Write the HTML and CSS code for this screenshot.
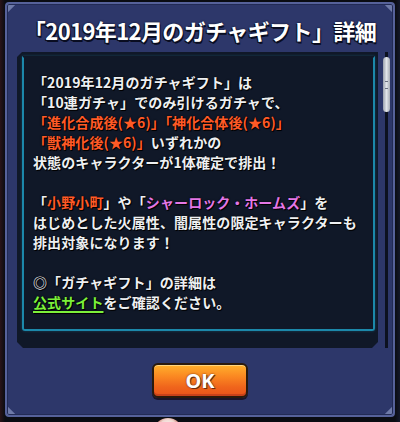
FILE: index.html
```html
<!DOCTYPE html>
<html lang="ja">
<head>
    <meta charset="UTF-8">
    <meta name="viewport" content="width=device-width, initial-scale=1.0">
    <title>ガチャギフト詳細</title>
    <link rel="stylesheet" href="styles.css">
</head>
<body>
    <div class="screen">
        <div class="dialog">
            <h1 class="dialog-title">「2019年12月のガチャギフト」詳細</h1>

            <div class="dialog-body">
                <div class="scroll-box">
                    <div class="scroll-inner">
                        <p>「2019年12月のガチャギフト」は<br>
                        「10連ガチャ」でのみ引けるガチャで、<br>
                        <span class="red">「進化合成後(★6)」「神化合体後(★6)」</span><br>
                        <span class="red">「獣神化後(★6)」</span>いずれかの<br>
                        状態のキャラクターが1体確定で排出！</p>

                        <p>「<span class="red">小野小町</span>」や「<span class="pink">シャーロック・ホームズ</span>」を<br>
                        はじめとした火属性、闇属性の限定キャラクターも<br>
                        排出対象になります！</p>

                        <p>◎「ガチャギフト」の詳細は<br>
                        <a class="link" href="#">公式サイト</a>をご確認ください。</p>
                    </div>
                </div>
                <div class="scrollbar">
                    <div class="thumb"><span></span></div>
                </div>
            </div>

            <div class="dialog-actions">
                <button class="ok-btn">OK</button>
            </div>
        </div>
        <div class="peek"></div>
    </div>
</body>
</html>
```

FILE: styles.css
```css
body {
    margin: 0;
    background-color: #0a0c12;
    font-family: "Noto Sans CJK JP", "Noto Sans", sans-serif;
}

.screen {
    width: 400px;
    height: 422px;
    overflow: hidden;
    padding-top: 2px;
    box-sizing: border-box;
    background: linear-gradient(90deg, #2a1418 0, #0a0c12 5px, #0a0c12 395px, #14182a 400px);
}

/* ダイアログ本体 */
.dialog {
    width: 390px;
    height: 415px;
    margin: 0 5px;
    box-sizing: border-box;
    border: 2px solid #56629a;
    border-radius: 4px;
    box-shadow: inset 0 0 0 1px #222b55;
    background:
        linear-gradient(135deg, #6e7aa8 6px, transparent 7px) top left / 12px 12px no-repeat,
        linear-gradient(225deg, #6e7aa8 6px, transparent 7px) top right / 12px 12px no-repeat,
        linear-gradient(45deg, #6e7aa8 6px, transparent 7px) bottom left / 12px 12px no-repeat,
        linear-gradient(315deg, #6e7aa8 6px, transparent 7px) bottom right / 12px 12px no-repeat,
        #2d376a;
    display: flex;
    flex-direction: column;
}

.dialog-title {
    margin: 4px 0 0;
    height: 44px;
    line-height: 44px;
    text-align: center;
    font-size: 22px;
    font-weight: 700;
    color: #ffffff;
    letter-spacing: -0.6px;
    text-shadow: 0 0 2px #0a0e22, 1px 2px 0 #0a0e22, -1px 1px 0 #0a0e22;
}

.dialog-body {
    display: flex;
    height: 296px;
    margin-left: 10px;
}

.scroll-box {
    width: 361px;
    padding: 4px 3px 17px 5px;
    box-sizing: border-box;
    background-color: #101828;
    clip-path: polygon(5px 0, 100% 0, 100% calc(100% - 6px), calc(100% - 6px) 100%, 6px 100%, 0 calc(100% - 6px), 0 5px);
}

.scroll-inner {
    height: 100%;
    box-sizing: border-box;
    border: 2px solid #1c88aa;
    border-top-color: transparent;
    border-radius: 0 0 3px 3px;
    box-shadow: 0 0 3px rgba(40, 170, 210, 0.3);
    padding: 14px 0 0 9px;
    font-size: 14px;
    line-height: 20px;
    font-weight: 700;
    color: #eef0f2;
    letter-spacing: 0.1px;
    text-shadow: 1px 1px 0 #000, 0 0 2px #000;
}

.scroll-inner p {
    margin: 0 0 20px;
}

.red {
    color: #ff5a26;
}

.pink {
    color: #e477e6;
}

.link {
    color: #7cf03a;
    text-decoration: underline;
    text-decoration-thickness: 2px;
    text-underline-offset: 3px;
}

.scrollbar {
    width: 7px;
    margin-left: 5px;
    background: linear-gradient(90deg, transparent 2px, #0c1120 2px, #0c1120 5px, transparent 5px);
}

.thumb {
    height: 55px;
    margin-top: 5px;
    border-radius: 4px;
    background: linear-gradient(90deg, #9aa0ac, #e2e5ea 50%, #a7acb6);
    display: flex;
    align-items: center;
    justify-content: center;
}

.thumb span {
    width: 3px;
    height: 6px;
    border-top: 1px solid #6a7080;
    border-bottom: 1px solid #6a7080;
}

.dialog-actions {
    flex: 1;
    display: flex;
    justify-content: center;
    padding-top: 15px;
}

.ok-btn {
    width: 96px;
    height: 35px;
    border: 2px solid #2b1a0c;
    border-radius: 6px;
    background: linear-gradient(#ffb02c 0, #fb8a22 35%, #f0661c 70%, #e8521a 100%);
    box-shadow: inset 0 1px 0 #ffd680, inset 0 -2px 0 #c8421a, 0 2px 0 #1a1428;
    color: #ffffff;
    font-family: "Noto Sans", sans-serif;
    font-size: 20px;
    font-weight: 700;
    text-shadow: 1px 1px 0 #6a2a10, 0 0 2px #6a2a10;
    cursor: pointer;
    padding: 0;
}

.peek {
    width: 30px;
    height: 30px;
    margin: 1px 0 0 153px;
    border-radius: 50%;
    background: radial-gradient(circle at 50% 30%, #ffffff 0, #f0d8d0 30%, #b02a1a 60%, #5a1008 100%);
}
```
